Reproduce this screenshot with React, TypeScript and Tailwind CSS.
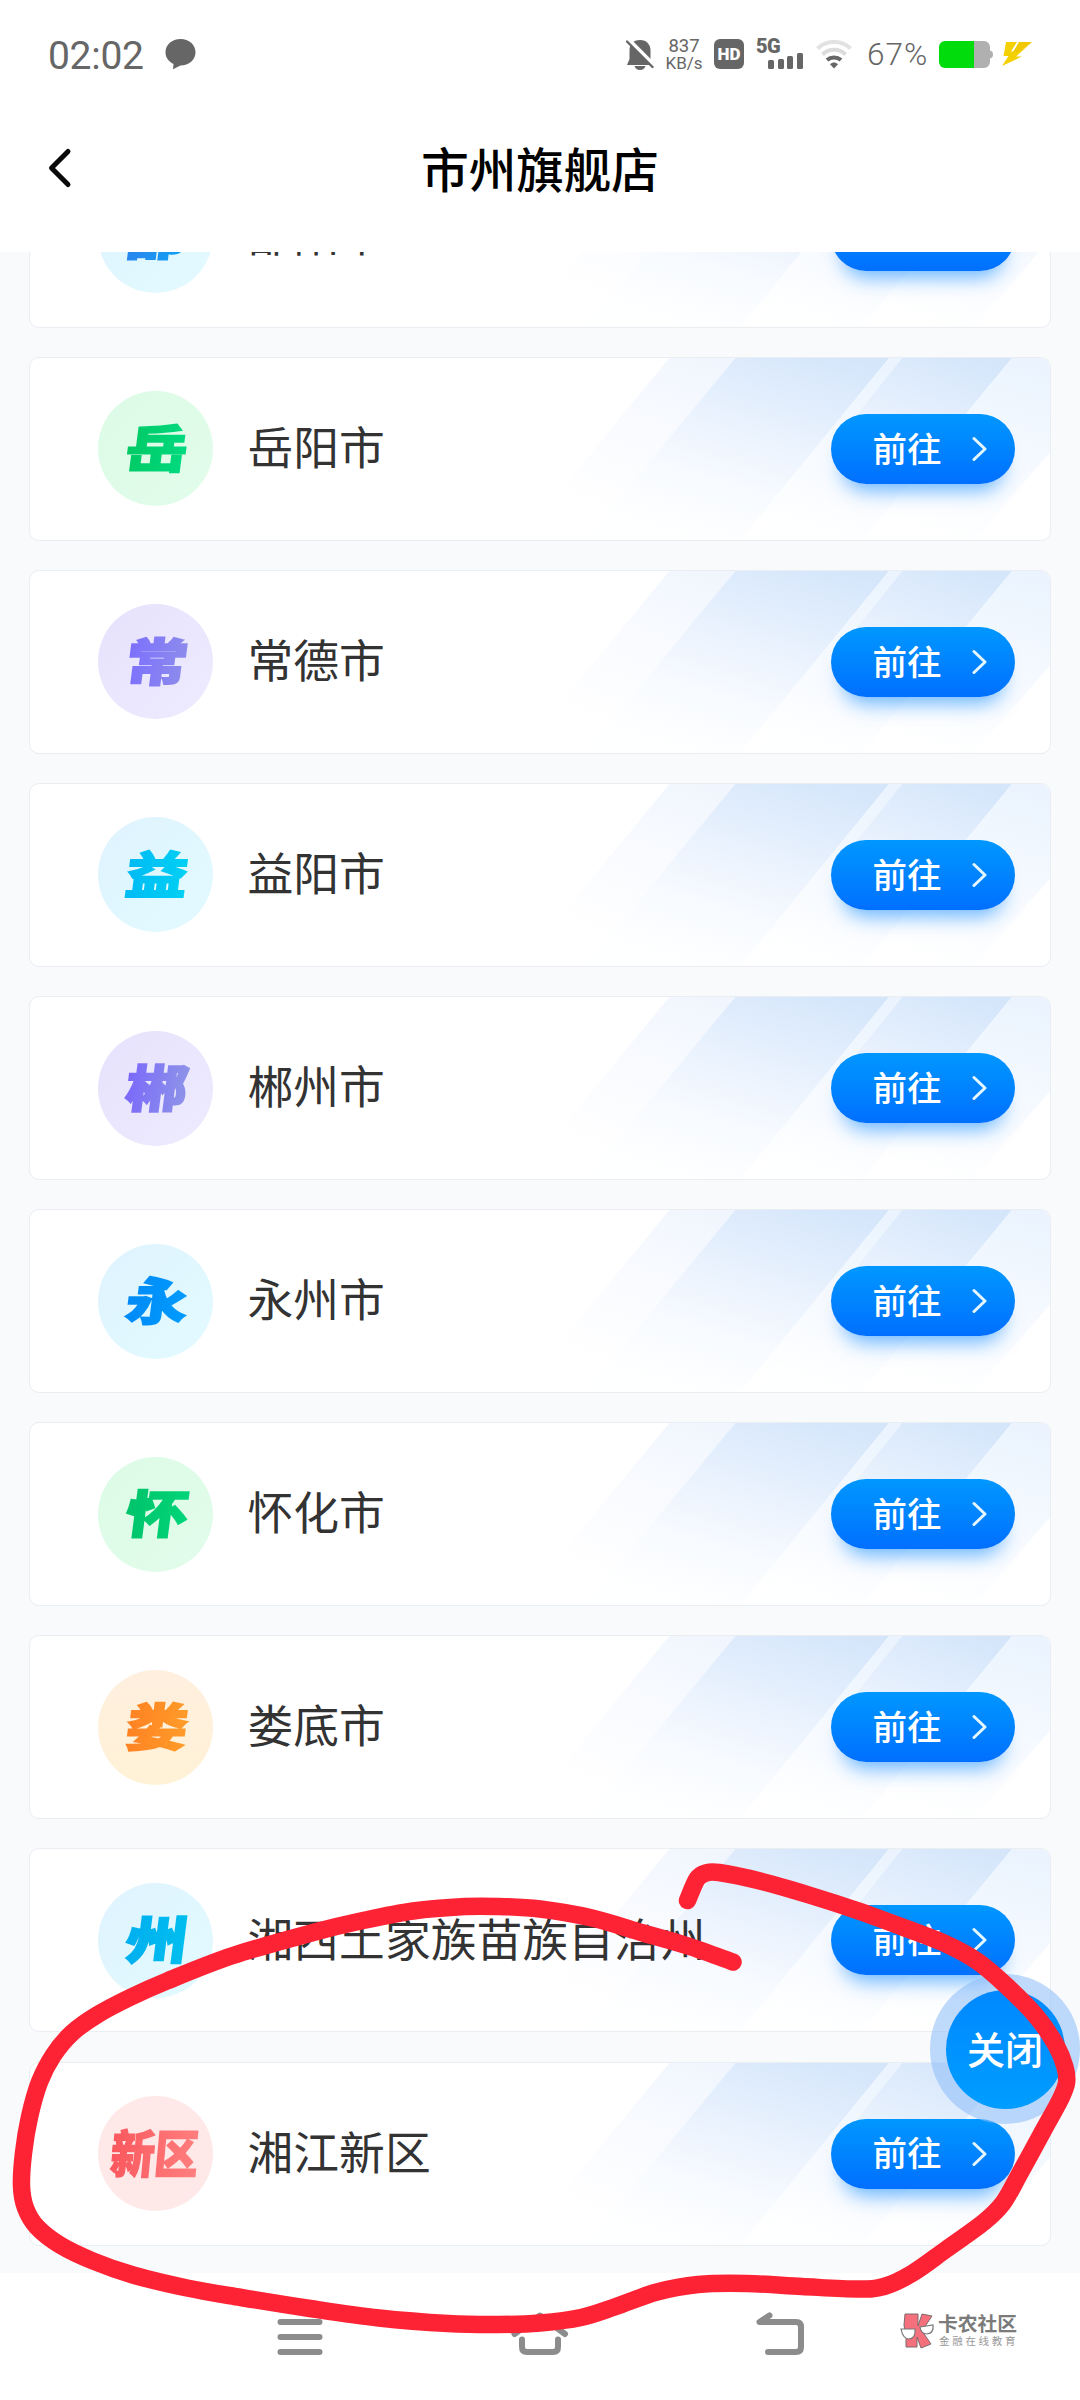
import React from 'react';
import { clsx } from 'clsx';

type City = { mark: string; name: string; circle: string; ink: string; markSize?: string };

const blueCircle = 'bg-gradient-to-br from-[#dff3fe] to-[#e2fbff]';
const greenCircle = 'bg-gradient-to-br from-[#dcfbe6] to-[#e2fdeb]';
const purpleCircle = 'bg-gradient-to-br from-[#e6e2fc] to-[#eeebff]';

const cities: City[] = [
  { mark: '邵', name: '邵阳市', circle: blueCircle, ink: 'from-[#2b82ee] to-[#00a4f5]' },
  { mark: '岳', name: '岳阳市', circle: greenCircle, ink: 'from-[#00c862] to-[#00dc82]' },
  { mark: '常', name: '常德市', circle: purpleCircle, ink: 'from-[#7b6cff] to-[#8f8ee9]' },
  { mark: '益', name: '益阳市', circle: blueCircle, ink: 'from-[#00b9f4] to-[#00d2f4]' },
  { mark: '郴', name: '郴州市', circle: purpleCircle, ink: 'from-[#7a64fb] to-[#9096e6]' },
  { mark: '永', name: '永州市', circle: blueCircle, ink: 'from-[#0088f5] to-[#009dff]' },
  { mark: '怀', name: '怀化市', circle: greenCircle, ink: 'from-[#00c268] to-[#00d67a]' },
  { mark: '娄', name: '娄底市', circle: 'bg-gradient-to-b from-[#ffefdf] to-[#fff2d6]', ink: 'from-[#ff7f22] to-[#ff9e2a]' },
  { mark: '州', name: '湘西土家族苗族自治州', circle: blueCircle, ink: 'from-[#00aef0] to-[#00c0ee]' },
  { mark: '新区', name: '湘江新区', circle: 'bg-[#ffe8e8]', ink: 'from-[#f9555c] to-[#ff8080]', markSize: 'scale-x-[0.86] translate-x-0' },
];

// Centre line of the hand-drawn marker loop
const loop: [number, number][] = [
  [733, 1962], [688, 1946], [643, 1933], [592, 1918], [540, 1909], [499, 1906.5], [465, 1906.5], [413, 1911],
  [361, 1921], [315, 1932], [233, 1955.5], [167, 1981], [130, 1997.5], [97, 2015], [72, 2033], [53.5, 2055],
  [39.5, 2082], [29.5, 2117], [23.5, 2153], [21.5, 2186], [25.5, 2208], [37, 2227], [60, 2245], [93, 2261],
  [133, 2275], [187, 2288], [241, 2297.5], [310, 2308.5], [379, 2318], [448, 2323.5], [499, 2324.5], [540, 2323],
  [581, 2317.5], [616, 2306.5], [657, 2292], [698, 2284.5], [747, 2283.5], [802, 2286.5], [857, 2289], [884, 2286.5],
  [912, 2273.5], [946, 2249.5], [984, 2222], [1003, 2203], [1019, 2175], [1043, 2131], [1060, 2100], [1066.5, 2083],
  [1065, 2067], [1056, 2045], [1036, 2016], [1005, 1984.5], [977, 1961], [946, 1944], [905, 1928], [857, 1910.5],
  [809, 1895], [760, 1881], [719, 1872.5], [706, 1873], [697, 1879], [687.5, 1900.5],
];

function smooth(points: [number, number][]) {
  let d = `M${points[0][0]} ${points[0][1]}`;
  for (let i = 0; i < points.length - 1; i++) {
    const a = points[i - 1] ?? points[i];
    const b = points[i];
    const c = points[i + 1];
    const e = points[i + 2] ?? c;
    d += `C${b[0] + (c[0] - a[0]) / 6} ${b[1] + (c[1] - a[1]) / 6} ${c[0] - (e[0] - b[0]) / 6} ${c[1] - (e[1] - b[1]) / 6} ${c[0]} ${c[1]}`;
  }
  return d;
}

function StatusBar() {
  return (
    <div className="h-[108px] shrink-0 flex items-center pl-[48px] pr-[48px] text-[#666] font-['Roboto',sans-serif]">
      <span className="text-[39px] leading-none tracking-[-0.3px] mt-1">02:02</span>
      <svg className="w-[31px] h-[31px] ml-[21px]" viewBox="0 0 31 31" fill="#666">
        <path d="M15.500 0C24 0 30.500 5.800 30.500 13.300S24 26.600 15.500 26.600L8 30.200 8.500 25C3.400 22.600 .5 18.400 .5 13.300.5 5.800 7 0 15.500 0z" />
      </svg>
      <div className="ml-auto flex items-center">
        <svg className="w-[28px] h-[31px]" viewBox="0 0 28 31">
          <path d="M14 1c7 0 10.500 5 10.500 10v9L27 26H1l2.500-6v-9C3.500 6 7 1 14 1zM8.500 27h11c-.8 2.500-2.800 4-5.500 4s-4.700-1.500-5.500-4z" fill="#666" />
          <path d="M2 0L29 27" stroke="#fff" strokeWidth="4" />
          <path d="M1 2.500L26.500 28" stroke="#666" strokeWidth="2.400" strokeLinecap="round" />
        </svg>
        <div className="ml-[13px] w-[34px] flex flex-col items-center text-[18.500px] leading-[17px] mt-[2px]">
          <span>837</span>
          <span className="text-[17px] leading-[17px]">KB/s</span>
        </div>
        <div className="ml-[13px] w-[30px] h-[30px] rounded-[6px] bg-[#666] text-white text-[17px] font-black leading-none flex items-center justify-center">HD</div>
        <div className="ml-[12px] w-[48px] h-[30px] flex items-start">
          <span className="w-[12px] -mt-[2px] text-[20px] leading-[19px] font-black tracking-[-0.5px]">5G</span>
          <svg className="w-[36px] h-[30px] shrink-0" viewBox="0 0 36 30" fill="#666">
            <rect x="0" y="21" width="6" height="9" rx="1.500" />
            <rect x="10" y="20" width="6" height="10" rx="1.500" />
            <rect x="19" y="17" width="6" height="13" rx="1.500" />
            <rect x="29" y="14" width="6" height="16" rx="1.500" />
          </svg>
        </div>
        <svg className="ml-[12px] w-[36px] h-[29px]" viewBox="0 0 36 29" fill="none" strokeWidth="4">
          <path d="M1.500 8.500C10.500 -.2 25.500 -.2 34.500 8.500" stroke="#e2e2e2" />
          <path d="M6.500 14.500C13 8.300 23 8.300 29.500 14.500" stroke="#dcdcdc" />
          <path d="M11 20C15 16.500 21 16.500 25 20" stroke="#666" />
          <path d="M14 24.200C16.500 22 19.500 22 22 24.200L18 28.500z" fill="#666" />
        </svg>
        <span className="ml-[15px] w-[64px] text-[31.500px] leading-none mt-[2px] font-light tracking-[1px]">67%</span>
        <svg className="ml-[8px] w-[54px] h-[27px]" viewBox="0 0 54 27">
          <path d="M35 0h10a6 6 0 0 1 6 6v3.500q3 .5 3 4t-3 4V21a6 6 0 0 1-6 6H35z" fill="#b0b0b0" />
          <path d="M6 0h29v27H6a6 6 0 0 1-6-6V6a6 6 0 0 1 6-6z" fill="#00dc0c" />
        </svg>
        <svg className="ml-[9px] w-[30px] h-[25px]" viewBox="0 0 30 25">
          <path d="M4 0H15L9 9.500H17L30 0 14 14.500H20L0 24 6.500 14H1.500z" fill="#f5d000" />
          <path d="M17 0H30L17 10H11z" fill="#f0c800" />
        </svg>
      </div>
    </div>
  );
}

function CardStripes() {
  return (
    <svg className="absolute inset-0 w-full h-full" viewBox="0 0 1021 183" preserveAspectRatio="none">
      <defs>
        <linearGradient id="band" x1="0.85" y1="0" x2="0.35" y2="1">
          <stop offset="0" stopColor="#d5e6fb" />
          <stop offset="0.35" stopColor="#e6f0fd" />
          <stop offset="0.7" stopColor="#f7faff" />
          <stop offset="1" stopColor="#feffff" />
        </linearGradient>
        <linearGradient id="edge" x1="0.85" y1="0" x2="0.45" y2="0.9">
          <stop offset="0" stopColor="#f1f6fe" />
          <stop offset="0.6" stopColor="#fbfcff" />
          <stop offset="1" stopColor="#ffffff" />
        </linearGradient>
        <linearGradient id="light" x1="0.7" y1="0" x2="0.4" y2="1">
          <stop offset="0" stopColor="#ebf4fe" />
          <stop offset="0.6" stopColor="#f8fbff" />
          <stop offset="1" stopColor="#ffffff" />
        </linearGradient>
      </defs>
      <path d="M640 0H706L560 183H490z" fill="url(#edge)" />
      <path d="M706 0H860L711 183H556z" fill="url(#band)" />
      <path d="M860 0H873L726 183H711z" fill="url(#light)" />
      <path d="M873 0H983L833 183H726z" fill="url(#band)" />
      <path d="M983 0H1021V95L945 183H833z" fill="url(#light)" />
    </svg>
  );
}

function CityCard({ city }: { city: City }) {
  return (
    <div className="relative h-[184px] shrink-0 rounded-[10px] bg-white border border-[#eaedf1] overflow-hidden">
      <CardStripes />
      <div className="relative h-full flex items-center pl-[67.500px] pr-[35px]">
        <div className={clsx('w-[115px] h-[115px] shrink-0 rounded-full flex items-center justify-center', city.circle)}>
          <span
            className={clsx(
              'shrink-0 whitespace-nowrap px-1 bg-gradient-to-r bg-clip-text text-transparent text-[51px] leading-[66px] font-black -skew-x-6 -translate-y-[3px] [-webkit-text-stroke:1.500px_transparent]',
              city.ink,
              city.markSize ?? 'scale-x-[1.22] translate-x-[3px]',
            )}
          >
            {city.mark}
          </span>
        </div>
        <span className="ml-[35px] text-[45.800px] leading-none text-[#333] whitespace-nowrap -mt-[6px]">{city.name}</span>
        <button className="ml-auto w-[184px] h-[70px] rounded-full bg-gradient-to-b from-[#0097ff] to-[#006fff] shadow-[0_18px_20px_-12px_rgba(0,132,255,0.6)] flex items-center pl-[41px] text-white">
          <span className="w-[70px] text-[34.500px] leading-none font-medium -mt-[4px]">前往</span>
          <svg className="ml-[30px] w-[15px] h-[26px]" viewBox="0 0 15 26" fill="none" stroke="#e4f6ff" strokeWidth="3" strokeLinecap="round" strokeLinejoin="round">
            <path d="M2 2.500L13 13 2 23.500" />
          </svg>
        </button>
      </div>
    </div>
  );
}

function NavBar() {
  return (
    <div className="h-[127px] shrink-0 bg-white flex items-start pt-[36px] pl-[274px]">
      <svg className="w-[52px] h-[48px]" viewBox="274 2309 52 48" fill="none" stroke="#8c8c8c" strokeWidth="6" strokeLinecap="round">
        <path d="M280.500 2322H319.500M280.500 2337H319.500M280.500 2352H319.500" />
      </svg>
      <svg className="ml-[184px] w-[60px] h-[48px]" viewBox="510 2309 60 48" fill="none" stroke="#8c8c8c" strokeWidth="6" strokeLinecap="round" strokeLinejoin="round">
        <path d="M514.500 2334L540 2315.500 565 2334M522 2339.500V2347Q522 2352 527 2352H553Q558 2352 558 2347V2339.500" />
      </svg>
      <svg className="ml-[184px] w-[52px] h-[48px]" viewBox="754 2309 52 48" fill="none" stroke="#8c8c8c" strokeWidth="6" strokeLinecap="round" strokeLinejoin="round">
        <path d="M769.500 2315.500L759.500 2322H796Q801 2322 801 2327V2347Q801 2352 796 2352H768" />
      </svg>
      <div className="ml-[94px] flex items-start mt-[4px]">
        <svg className="w-[35px] h-[36px]" viewBox="0 0 35 36">
          <path d="M5 1H18V13L22 1 32 3 22 18 31 31 21 35 17 24V34H6V24L4 12z" fill="#f4707c" stroke="#7d6a6c" strokeWidth="1" />
          <path d="M1 16L15 16Q16 25 9 26 3 26 1 16zM20 14L33 12Q34 20 27 21 21 21 20 14z" fill="#fff" stroke="#777" strokeWidth="1.200" />
        </svg>
        <div className="ml-[3px] flex flex-col">
          <span className="text-[19.800px] leading-[20px] font-bold text-[#7b7b7b]">卡农社区</span>
          <span className="ml-[1px] mt-[1px] text-[10.500px] leading-[13px] tracking-[2.700px] text-[#999] whitespace-nowrap">金融在线教育</span>
        </div>
      </div>
    </div>
  );
}

export default function App() {
  return (
    <div className="relative w-[1080px] h-[2400px] overflow-hidden bg-white flex flex-col font-['Noto_Sans_CJK_SC',sans-serif]">
      <StatusBar />
      <header className="h-[144px] shrink-0 grid grid-cols-[1fr_auto_1fr] items-start pl-[47px]">
        <svg className="w-[26px] h-[42px] mt-[39px]" viewBox="0 0 26 42" fill="none" stroke="#0a0a0a" strokeWidth="5" strokeLinecap="round" strokeLinejoin="round">
          <path d="M21 4.500L4.500 21 21 37.500" />
        </svg>
        <h1 className="text-[47.500px] leading-none font-medium text-black mt-[36px] mr-[47px]">市州旗舰店</h1>
      </header>
      <main className="h-[2021px] shrink-0 overflow-hidden bg-[#f9fafc] flex flex-col justify-end gap-[29.100px] pl-[29px] pr-[29px] pb-[27.500px]">
        {cities.map((city) => (
          <CityCard key={city.name} city={city} />
        ))}
      </main>
      <NavBar />

      {/* Floating close button */}
      <button className="absolute left-[930px] top-[1974px] w-[150px] h-[150px] rounded-full bg-[#8bbcf8]/55 flex items-center justify-center">
        <span className="w-[119px] h-[119px] rounded-full bg-gradient-to-b from-[#0088ff] to-[#009dff] text-white text-[38px] leading-none font-medium flex items-center justify-center pb-[2px]">
          关闭
        </span>
      </button>

      {/* Marker annotation */}
      <svg className="absolute inset-0 w-full h-full pointer-events-none" viewBox="0 0 1080 2400" fill="none">
        <path d={smooth(loop)} stroke="#fd2334" strokeWidth="17.500" strokeLinecap="round" strokeLinejoin="round" />
      </svg>
    </div>
  );
}
